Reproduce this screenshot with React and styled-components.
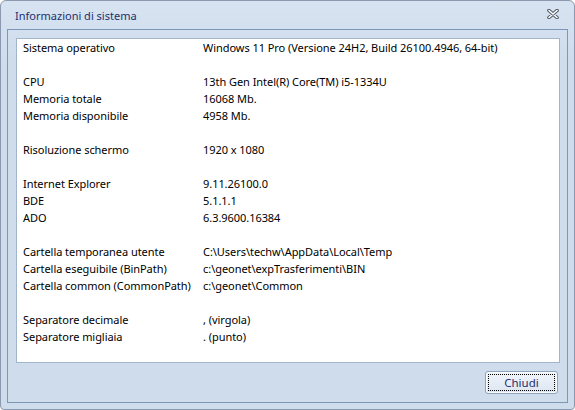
import React from "react";
import styled, { createGlobalStyle } from "styled-components";

const Global = createGlobalStyle`
  html, body { margin: 0; padding: 0; background: #ffffff; }
  body { font-family: "Noto Sans", "Open Sans", sans-serif; }
`;

const Window = styled.div`
  box-sizing: border-box;
  width: 575px;
  height: 410px;
  border: 1px solid #8a99ad;
  border-radius: 6px 6px 4px 4px;
  background: linear-gradient(#d7e3f1, #cfdcec 60px, #cfdcec);
  display: flex;
  flex-direction: column;
  padding: 0 6px 6px 6px;
`;

const TitleBar = styled.div`
  height: 28px;
  display: flex;
  align-items: center;
  justify-content: space-between;
  padding: 0 8px 0 8px;
`;

const Title = styled.span`
  font-size: 11px;
  color: #1e2f6e;
  padding-top: 1px;
`;

const CloseBtn = styled.div`
  width: 12px;
  height: 10px;
  display: flex;
  margin-top: -2px;
  margin-right: 1px;
`;

const Client = styled.div`
  flex: 1;
  border: 1px solid #7d97b8;
  display: flex;
  flex-direction: column;
  padding: 8px 7px 8px 8px;
`;

const Panel = styled.div`
  flex: 1;
  background: #ffffff;
  border: 1px solid #a3b5cb;
  padding: 0 6px;
`;

const Grid = styled.div`
  display: grid;
  grid-template-columns: 180px 1fr;
  grid-auto-rows: 17px;
  font-size: 11px;
  letter-spacing: -0.05px;
  color: #000;
  align-items: center;
`;

const Cell = styled.span`
  white-space: nowrap;
  line-height: 17px;
`;

const Spacer = styled.div`
  grid-column: 1 / span 2;
`;

const Footer = styled.div`
  display: flex;
  justify-content: flex-end;
  padding-top: 8px;
  padding-right: 2px;
`;

const Button = styled.button`
  box-sizing: border-box;
  width: 73px;
  height: 23px;
  border: 1px solid #8fa3bd;
  border-radius: 3px;
  background: linear-gradient(#f2f6fb, #e6edf6 50%, #dbe5f1);
  font-family: "Noto Sans", sans-serif;
  font-size: 11.5px;
  color: #1e2f6e;
  padding: 2px;
  display: flex;
  box-shadow: inset 0 0 0 1px #f8fbff;
`;

const Focus = styled.span`
  flex: 1;
  border: 1px dotted #000;
  display: flex;
  align-items: center;
  justify-content: center;
  line-height: 1;
`;

const rows = [
  ["Sistema operativo", "Windows 11 Pro (Versione 24H2, Build 26100.4946, 64-bit)"],
  null,
  ["CPU", "13th Gen Intel(R) Core(TM) i5-1334U"],
  ["Memoria totale", "16068 Mb."],
  ["Memoria disponibile", "4958 Mb."],
  null,
  ["Risoluzione schermo", "1920 x 1080"],
  null,
  ["Internet Explorer", "9.11.26100.0"],
  ["BDE", "5.1.1.1"],
  ["ADO", "6.3.9600.16384"],
  null,
  ["Cartella temporanea utente", "C:\\Users\\techw\\AppData\\Local\\Temp"],
  ["Cartella eseguibile (BinPath)", "c:\\geonet\\expTrasferimenti\\BIN"],
  ["Cartella common (CommonPath)", "c:\\geonet\\Common"],
  null,
  ["Separatore decimale", ", (virgola)"],
  ["Separatore migliaia", ". (punto)"],
];

export default function App() {
  return (
    <>
      <Global />
      <Window>
        <TitleBar>
          <Title>Informazioni di sistema</Title>
          <CloseBtn>
            <svg width="12" height="10" viewBox="0 0 12 10">
              <path d="M2 1.5 L10 8.5 M10 1.5 L2 8.5" stroke="#505a66" strokeWidth="3.6" strokeLinecap="round" fill="none" />
              <path d="M2 1.5 L10 8.5 M10 1.5 L2 8.5" stroke="#ffffff" strokeWidth="1.6" strokeLinecap="round" fill="none" />
            </svg>
          </CloseBtn>
        </TitleBar>
        <Client>
          <Panel>
            <Grid>
              {rows.map((r, i) =>
                r ? (
                  <React.Fragment key={i}>
                    <Cell>{r[0]}</Cell>
                    <Cell>{r[1]}</Cell>
                  </React.Fragment>
                ) : (
                  <Spacer key={i} />
                )
              )}
            </Grid>
          </Panel>
          <Footer>
            <Button>
              <Focus>Chiudi</Focus>
            </Button>
          </Footer>
        </Client>
      </Window>
    </>
  );
}
